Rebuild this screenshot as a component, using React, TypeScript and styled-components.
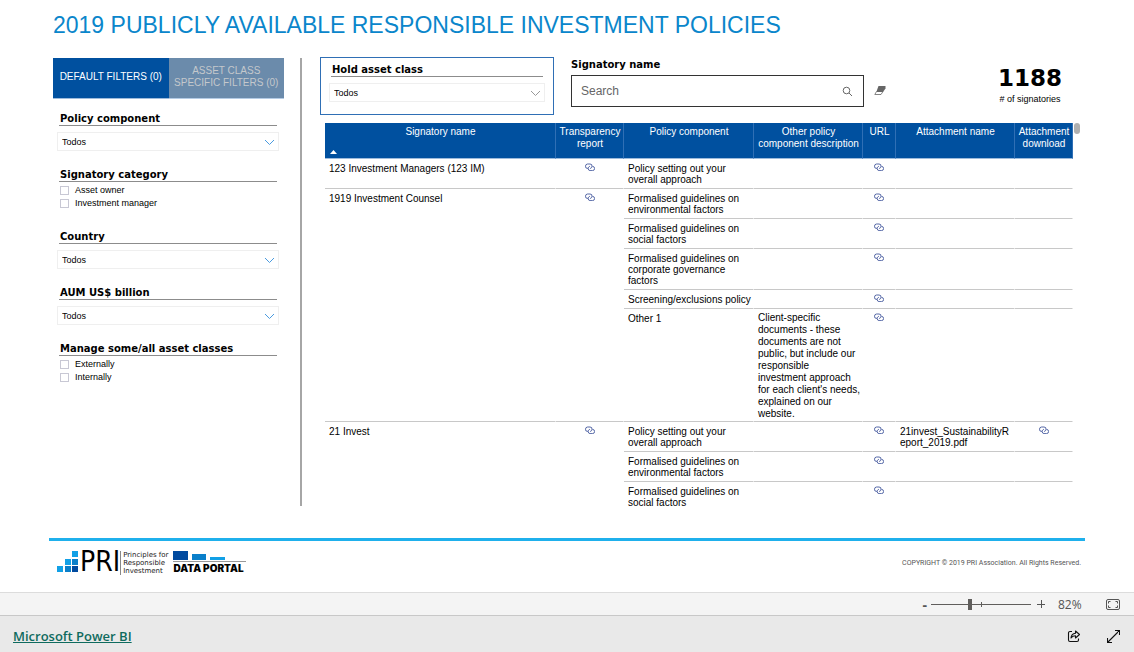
import React, { useState } from "react";
import styled, { createGlobalStyle } from "styled-components";

const sans = `"Liberation Sans", Arial, sans-serif`;
const wide = `"DejaVu Sans", Verdana, sans-serif`;
const heavy = `Inter, "DejaVu Sans", sans-serif`;
const ui = `"Open Sans", "Segoe UI", sans-serif`;

const GlobalStyle = createGlobalStyle`
  *, *::before, *::after { box-sizing: border-box; }
  body { margin: 0; background: #fff; color: #000; font-family: ${sans}; }
  button, input, select { font: inherit; color: inherit; border-radius: 0; }
`;

const Page = styled.div`
  min-height: 100vh;
  display: flex;
  flex-direction: column;
`;

const Report = styled.main`
  flex: 1;
  display: flex;
  flex-direction: column;
  padding: 0 49px;
`;

const Title = styled.h1`
  margin: 0;
  padding: 10px 0 18px 4px;
  font-size: 23px;
  line-height: 30px;
  font-weight: 400;
  color: #0a86cb;
`;

const Columns = styled.div`
  display: flex;
  padding-left: 4px;
`;

const Sidebar = styled.aside`
  flex: none;
  width: 231px;
`;

const Tabs = styled.div`
  display: grid;
  grid-template-columns: repeat(2, minmax(0, 1fr));
  height: 41px;
`;

const TabButton = styled.button<{ $active?: boolean }>`
  border: 0;
  border-bottom: 1px solid ${(p) => (p.$active ? "#9dbbdc" : "#b4cbe4")};
  padding: 0 4px 2px;
  font-size: 10px;
  line-height: 12px;
  white-space: nowrap;
  color: ${(p) => (p.$active ? "#fff" : "#c4c8cc")};
  background: ${(p) => (p.$active ? "#00509f" : "#6b8bab")};
`;

const Filters = styled.div`
  display: flex;
  flex-direction: column;
  gap: 17px;
  padding: 13px 5px 0 4px;
`;

const FilterGroup = styled.section`
  display: flex;
  flex-direction: column;
`;

const FilterHeading = styled.h2`
  margin: 0 2px;
  padding-left: 1px;
  border-bottom: 1px solid #8c8c8c;
  font-family: ${wide};
  font-size: 10px;
  line-height: 13px;
  font-weight: 700;
  white-space: nowrap;
`;

const SelectBox = styled.div`
  position: relative;
  margin-top: 6px;
  border: 1px solid #efefef;
`;

const Select = styled.select`
  display: block;
  width: 100%;
  height: 17px;
  padding: 0 20px 0 4px;
  border: 0;
  appearance: none;
  background: #fff;
  font-size: 9px;
`;

const SelectArrow = styled.svg`
  position: absolute;
  right: 3px;
  top: 6px;
  pointer-events: none;
`;

const CheckList = styled.div`
  padding: 2px 0 3px 3px;
`;

const CheckRow = styled.label`
  display: flex;
  align-items: center;
  gap: 6px;
  height: 13px;
  font-size: 9px;
  line-height: 13px;
`;

const CheckBox = styled.input`
  appearance: none;
  width: 9px;
  height: 9px;
  margin: 0;
  border: 1px solid #c8c8d4;
  background: #fff;
  &:checked { background: #00509f; }
`;

const Divider = styled.div`
  width: 2px;
  margin: 0 18px 0 16px;
  background: #a6a6a6;
`;

const Content = styled.div`
  flex: 1;
  min-width: 0;
`;

const TopRow = styled.div`
  display: flex;
  align-items: flex-start;
  margin-top: -1px;
`;

const AssetClass = styled.section`
  width: 234px;
  height: 58px;
  padding: 5px 8px 0;
  border: 1px solid #2f6fb5;
`;

const SearchArea = styled.div`
  margin-left: 17px;
  padding-top: 1px;
`;

const SearchLabel = styled.label`
  display: block;
  font-family: ${wide};
  font-size: 10px;
  line-height: 13px;
  font-weight: 700;
`;

const SearchRow = styled.div`
  display: flex;
  align-items: center;
  gap: 10px;
  margin-top: 4px;
`;

const SearchBox = styled.div`
  display: flex;
  align-items: center;
  width: 293px;
  height: 32px;
  padding: 0 10px 0 9px;
  border: 1px solid #333;
`;

const SearchInput = styled.input`
  flex: 1;
  min-width: 0;
  border: 0;
  padding: 0;
  outline: 0;
  background: transparent;
  font-size: 12px;
  &::placeholder { color: #666; opacity: 1; }
`;

const IconButton = styled.button`
  display: flex;
  align-items: center;
  justify-content: center;
  padding: 0;
  border: 0;
  background: transparent;
`;

const StepButton = styled(IconButton)`
  font-size: 14px;
  font-weight: 700;
`;

const Stat = styled.div`
  margin: 8px 18px 0 auto;
  width: 74px;
  text-align: center;
`;

const StatValue = styled.div`
  font-family: ${wide};
  font-size: 23px;
  line-height: 26px;
  font-weight: 700;
`;

const StatLabel = styled.div`
  font-size: 9px;
  line-height: 16px;
  white-space: nowrap;
`;

const TableArea = styled.div`
  display: flex;
  align-items: flex-start;
  gap: 1px;
  margin-top: 8px;
  padding: 0 5px;
`;

const TableViewport = styled.div`
  flex: 1;
  min-width: 0;
  height: 383px;
  overflow: hidden;
`;

const ScrollThumb = styled.div`
  width: 6px;
  height: 11px;
  border-radius: 3px;
  background: #b0b0b0;
`;

const Table = styled.table`
  width: 100%;
  table-layout: fixed;
  border-collapse: separate;
  border-spacing: 0;
  font-size: 10px;
  line-height: 11px;
`;

const Col = styled.col<{ $w?: number }>`
  width: ${(p) => (p.$w ? `${p.$w}px` : "auto")};
`;

const Th = styled.th`
  position: relative;
  height: 36px;
  padding: 3px 1px 0 2px;
  border-right: 1px solid #2f6fb5;
  border-bottom: 1px solid #9dbbdc;
  background: #00509f;
  color: #fff;
  font-weight: 400;
  line-height: 12px;
  vertical-align: top;
`;

const SortMark = styled.svg`
  position: absolute;
  left: 5px;
  bottom: 4px;
`;

const Td = styled.td`
  padding: 4px 1px 3px 4px;
  border-right: 1px solid #fff;
  border-bottom: 1px solid #c8c8c8;
  vertical-align: top;
  overflow-wrap: anywhere;
`;

const DescriptionTd = styled(Td)`
  padding: 3px 2px 1px 4px;
  line-height: 12px;
`;

const IconTd = styled(Td)`
  padding-left: 1px;
  text-align: center;
`;

const CellLink = styled.a`
  display: inline-block;
  vertical-align: top;
  height: 8px;
  svg { display: block; }
`;

const Footer = styled.footer`
  display: flex;
  justify-content: space-between;
  align-items: flex-start;
  height: 54px;
  margin-top: 32px;
  padding: 10px 4px 0 8px;
  border-top: 3px solid #1fb0ec;
`;

const Logo = styled.div`
  display: flex;
  align-items: flex-start;
`;

const LogoName = styled.span`
  margin-left: 1px;
  font-family: "DejaVu Sans Condensed", "DejaVu Sans", sans-serif;
  font-size: 28px;
  line-height: 22px;
`;

const LogoTagline = styled.span`
  padding-left: 2px;
  border-left: 1px solid #888;
  font-family: ${wide};
  font-size: 7px;
  line-height: 8px;
  color: #222;
  white-space: nowrap;
`;

const Portal = styled.span`
  margin-left: 5px;
  font-family: ${heavy};
  font-size: 10px;
  line-height: 12px;
  font-weight: 900;
  white-space: nowrap;
  svg { display: block; }
`;

const Copyright = styled.span`
  margin-top: 7px;
  font-family: Roboto, sans-serif;
  font-size: 7px;
  line-height: 10px;
  color: #555;
`;

const ZoomBar = styled.div`
  display: flex;
  align-items: center;
  justify-content: flex-end;
  height: 23px;
  padding-right: 14px;
  border-top: 1px solid #dcdcdc;
  background: #f4f4f4;
  color: #555;
  font-family: ${ui};
  font-size: 12px;
`;

const SliderWrap = styled.span`
  position: relative;
  display: flex;
  width: 100px;
  margin: 0 6px 0 4px;
`;

const Slider = styled.input`
  appearance: none;
  width: 100%;
  height: 12px;
  margin: 0;
  background: linear-gradient(#605e5c, #605e5c) center / 100% 1px no-repeat;
  &::-webkit-slider-thumb {
    appearance: none;
    width: 4px;
    height: 11px;
    background: #605e5c;
  }
`;

const SliderTick = styled.span`
  position: absolute;
  left: 50px;
  top: 4px;
  width: 1px;
  height: 5px;
  background: #605e5c;
`;

const ZoomValue = styled.span`
  width: 24px;
  margin: 0 24px 0 13px;
`;

const BrandBar = styled.div`
  display: flex;
  align-items: center;
  gap: 26px;
  height: 37px;
  padding: 4px 14px 0 13px;
  border-top: 1px solid #c8c8c8;
  background: #e9e9e9;
`;

const BrandLink = styled.a`
  margin-right: auto;
  font-family: ${ui};
  font-size: 13px;
  font-weight: 600;
  color: #0f6b5e;
`;

const LinkIcon = () => (
  <svg width="10" height="8" viewBox="0 0 10 8" fill="none" stroke="#2c4391" strokeWidth="0.8">
    <path d="M3 5.400H2.500A2 2 0 0 1 .5 3.200 2.200 2.200 0 0 1 2.500 1H5a2 2 0 0 1 2 2.200c0 1.200-.8 2.200-2 2.200" />
    <path d="M7.500 3.400a2 2 0 0 1 0 4.200H5A2 2 0 0 1 3.200 5.500c0-1.200.7-2.100 1.800-2.100" />
  </svg>
);

const Chevron = ({ color = "#4a9be0" }: { color?: string }) => (
  <SelectArrow width="11" height="7" viewBox="0 0 11 7" fill="none" stroke={color}>
    <path d="M1 1l4.500 4.500L10 1" />
  </SelectArrow>
);

function Dropdown({ label, color }: { label: string; color?: string }) {
  return (
    <SelectBox>
      <Select aria-label={label} defaultValue="Todos">
        <option>Todos</option>
      </Select>
      <Chevron color={color} />
    </SelectBox>
  );
}

type Filter = { title: string; options?: string[] };

const filters: Filter[] = [
  { title: "Policy component" },
  { title: "Signatory category", options: ["Asset owner", "Investment manager"] },
  { title: "Country" },
  { title: "AUM US$ billion" },
  { title: "Manage some/all asset classes", options: ["Externally", "Internally"] },
];

type Policy = { component: string; description?: string; attachment?: string };
type Signatory = { name: string; policies: Policy[] };

const signatories: Signatory[] = [
  {
    name: "123 Investment Managers (123 IM)",
    policies: [{ component: "Policy setting out your overall approach" }],
  },
  {
    name: "1919 Investment Counsel",
    policies: [
      { component: "Formalised guidelines on environmental factors" },
      { component: "Formalised guidelines on social factors" },
      { component: "Formalised guidelines on corporate governance factors" },
      { component: "Screening/exclusions policy" },
      {
        component: "Other 1",
        description:
          "Client-specific documents - these documents are not public, but include our responsible investment approach for each client's needs, explained on our website.",
      },
    ],
  },
  {
    name: "21 Invest",
    policies: [
      {
        component: "Policy setting out your overall approach",
        attachment: "21invest_SustainabilityReport_2019.pdf",
      },
      { component: "Formalised guidelines on environmental factors" },
      { component: "Formalised guidelines on social factors" },
    ],
  },
];

const CellIcon = ({ label }: { label: string }) => (
  <CellLink href="#" aria-label={label}>
    <LinkIcon />
  </CellLink>
);

function PolicyTable() {
  return (
    <Table>
      <colgroup>
        <Col />
        <Col $w={68} />
        <Col $w={130} />
        <Col $w={109} />
        <Col $w={33} />
        <Col $w={119} />
        <Col $w={58} />
      </colgroup>
      <thead>
        <tr>
          <Th>
            Signatory name
            <SortMark width="7" height="4" viewBox="0 0 7 4" fill="#fff">
              <path d="M0 4L3.500 0L7 4z" />
            </SortMark>
          </Th>
          <Th>Transparency report</Th>
          <Th>Policy component</Th>
          <Th>Other policy component description</Th>
          <Th>URL</Th>
          <Th>Attachment name</Th>
          <Th>Attachment download</Th>
        </tr>
      </thead>
      <tbody>
        {signatories.map((s) =>
          s.policies.map((p, i) => (
            <tr key={s.name + i}>
              {i === 0 && (
                <>
                  <Td rowSpan={s.policies.length}>{s.name}</Td>
                  <IconTd rowSpan={s.policies.length}>
                    <CellIcon label={`${s.name} transparency report`} />
                  </IconTd>
                </>
              )}
              <Td>{p.component}</Td>
              <DescriptionTd>{p.description}</DescriptionTd>
              <IconTd>
                <CellIcon label={`${p.component} URL`} />
              </IconTd>
              <Td>{p.attachment}</Td>
              <IconTd>
                {p.attachment && <CellIcon label={`Download ${p.attachment}`} />}
              </IconTd>
            </tr>
          ))
        )}
      </tbody>
    </Table>
  );
}

const PriLogo = () => (
  <Logo>
    <svg width="22" height="22" viewBox="0 0 22 22">
      <path fill="#12a0e6" d="M0 15h6v6H0zM8 8h6v6H8zM15 0h6v6h-6z" />
      <path fill="#0a7fca" d="M8 15h6v6H8zM15 8h6v6h-6z" />
      <path fill="#004a9f" d="M15 15h6v6h-6z" />
    </svg>
    <LogoName>PRI</LogoName>
    <LogoTagline>
      Principles for
      <br />
      Responsible
      <br />
      Investment
    </LogoTagline>
    <Portal>
      <svg width="74" height="11" viewBox="0 0 74 11">
        <path fill="#004a9f" d="M0 0h15v9H0z" />
        <path fill="#0a7fca" d="M19 3h14v6H19z" />
        <path fill="#12a0e6" d="M37 6h15v3H37z" />
        <path fill="#999" d="M0 10h73v1H0z" />
      </svg>
      DATA PORTAL
    </Portal>
  </Logo>
);

export default function App() {
  const [tab, setTab] = useState(0);
  return (
    <Page>
      <GlobalStyle />
      <Report>
        <Title>2019 PUBLICLY AVAILABLE RESPONSIBLE INVESTMENT POLICIES</Title>
        <Columns>
          <Sidebar>
            <Tabs>
              <TabButton $active={tab === 0} onClick={() => setTab(0)}>
                DEFAULT FILTERS (0)
              </TabButton>
              <TabButton $active={tab === 1} onClick={() => setTab(1)}>
                ASSET CLASS
                <br />
                SPECIFIC FILTERS (0)
              </TabButton>
            </Tabs>
            <Filters>
              {filters.map((f) => (
                <FilterGroup key={f.title}>
                  <FilterHeading>{f.title}</FilterHeading>
                  {f.options ? (
                    <CheckList>
                      {f.options.map((o) => (
                        <CheckRow key={o}>
                          <CheckBox type="checkbox" />
                          {o}
                        </CheckRow>
                      ))}
                    </CheckList>
                  ) : (
                    <Dropdown label={f.title} />
                  )}
                </FilterGroup>
              ))}
            </Filters>
          </Sidebar>
          <Divider />
          <Content>
            <TopRow>
              <AssetClass>
                <FilterHeading>Hold asset class</FilterHeading>
                <Dropdown label="Hold asset class" color="#999" />
              </AssetClass>
              <SearchArea>
                <SearchLabel htmlFor="signatory">Signatory name</SearchLabel>
                <SearchRow>
                  <SearchBox>
                    <SearchInput id="signatory" type="text" placeholder="Search" />
                    <IconButton aria-label="Search">
                      <svg width="11" height="11" viewBox="0 0 11 11" fill="none" stroke="#666">
                        <circle cx="4.500" cy="4.500" r="3.300" />
                        <path d="M7 7l3 3" />
                      </svg>
                    </IconButton>
                  </SearchBox>
                  <IconButton aria-label="Clear search">
                    <svg width="12" height="10" viewBox="0 0 12 10">
                      <path d="M4.500 0H11.500V2.500L9 6H2.300z" fill="#666" />
                      <path d="M2.500 5.500L.8 8.500H7L9 5.500" fill="none" stroke="#666" strokeWidth="0.8" />
                    </svg>
                  </IconButton>
                </SearchRow>
              </SearchArea>
              <Stat>
                <StatValue>1188</StatValue>
                <StatLabel># of signatories</StatLabel>
              </Stat>
            </TopRow>
            <TableArea>
              <TableViewport>
                <PolicyTable />
              </TableViewport>
              <ScrollThumb />
            </TableArea>
          </Content>
        </Columns>
        <Footer>
          <PriLogo />
          <Copyright>COPYRIGHT © 2019 PRI Association. All Rights Reserved.</Copyright>
        </Footer>
      </Report>
      <ZoomBar>
        <StepButton aria-label="Zoom out">-</StepButton>
        <SliderWrap>
          <Slider type="range" aria-label="Zoom" min={0} max={100} defaultValue={39} />
          <SliderTick />
        </SliderWrap>
        <StepButton aria-label="Zoom in">
          <svg width="8" height="8" viewBox="0 0 8 8" stroke="#555">
            <path d="M0 4.500h8M4.500 0v8" />
          </svg>
        </StepButton>
        <ZoomValue>82%</ZoomValue>
        <IconButton aria-label="Fit to page">
          <svg width="14" height="11" viewBox="0 0 14 11" fill="none" stroke="#555">
            <rect x=".5" y=".5" width="13" height="10" rx="1.500" />
            <path d="M2.500 4.500V2.500H4.500M9.500 2.500h2V4.500M11.500 6.500V8.500H9.500M4.500 8.500H2.500V6.500" />
          </svg>
        </IconButton>
      </ZoomBar>
      <BrandBar>
        <BrandLink href="#">Microsoft Power BI</BrandLink>
        <IconButton aria-label="Share">
          <svg width="14" height="13" viewBox="0 0 14 13" fill="none" stroke="#111" strokeWidth="1.100" strokeLinejoin="round">
            <path d="M5 1.500H3A1.500 1.500 0 0 0 1.500 3v7A1.500 1.500 0 0 0 3 11.500h7A1.500 1.500 0 0 0 11.500 10V8.500" />
            <path d="M8.500 1L12.500 4.500 8.500 8V5.800C6.500 5.800 5 6.500 4 8c.2-2.800 1.700-4.500 4.500-4.800z" />
          </svg>
        </IconButton>
        <IconButton aria-label="Full screen">
          <svg width="13" height="13" viewBox="0 0 13 13" fill="none" stroke="#111" strokeWidth="1.100">
            <path d="M.5 12.500l12-12M8 .5h4.500V5M.5 8v4.500H5" />
          </svg>
        </IconButton>
      </BrandBar>
    </Page>
  );
}
